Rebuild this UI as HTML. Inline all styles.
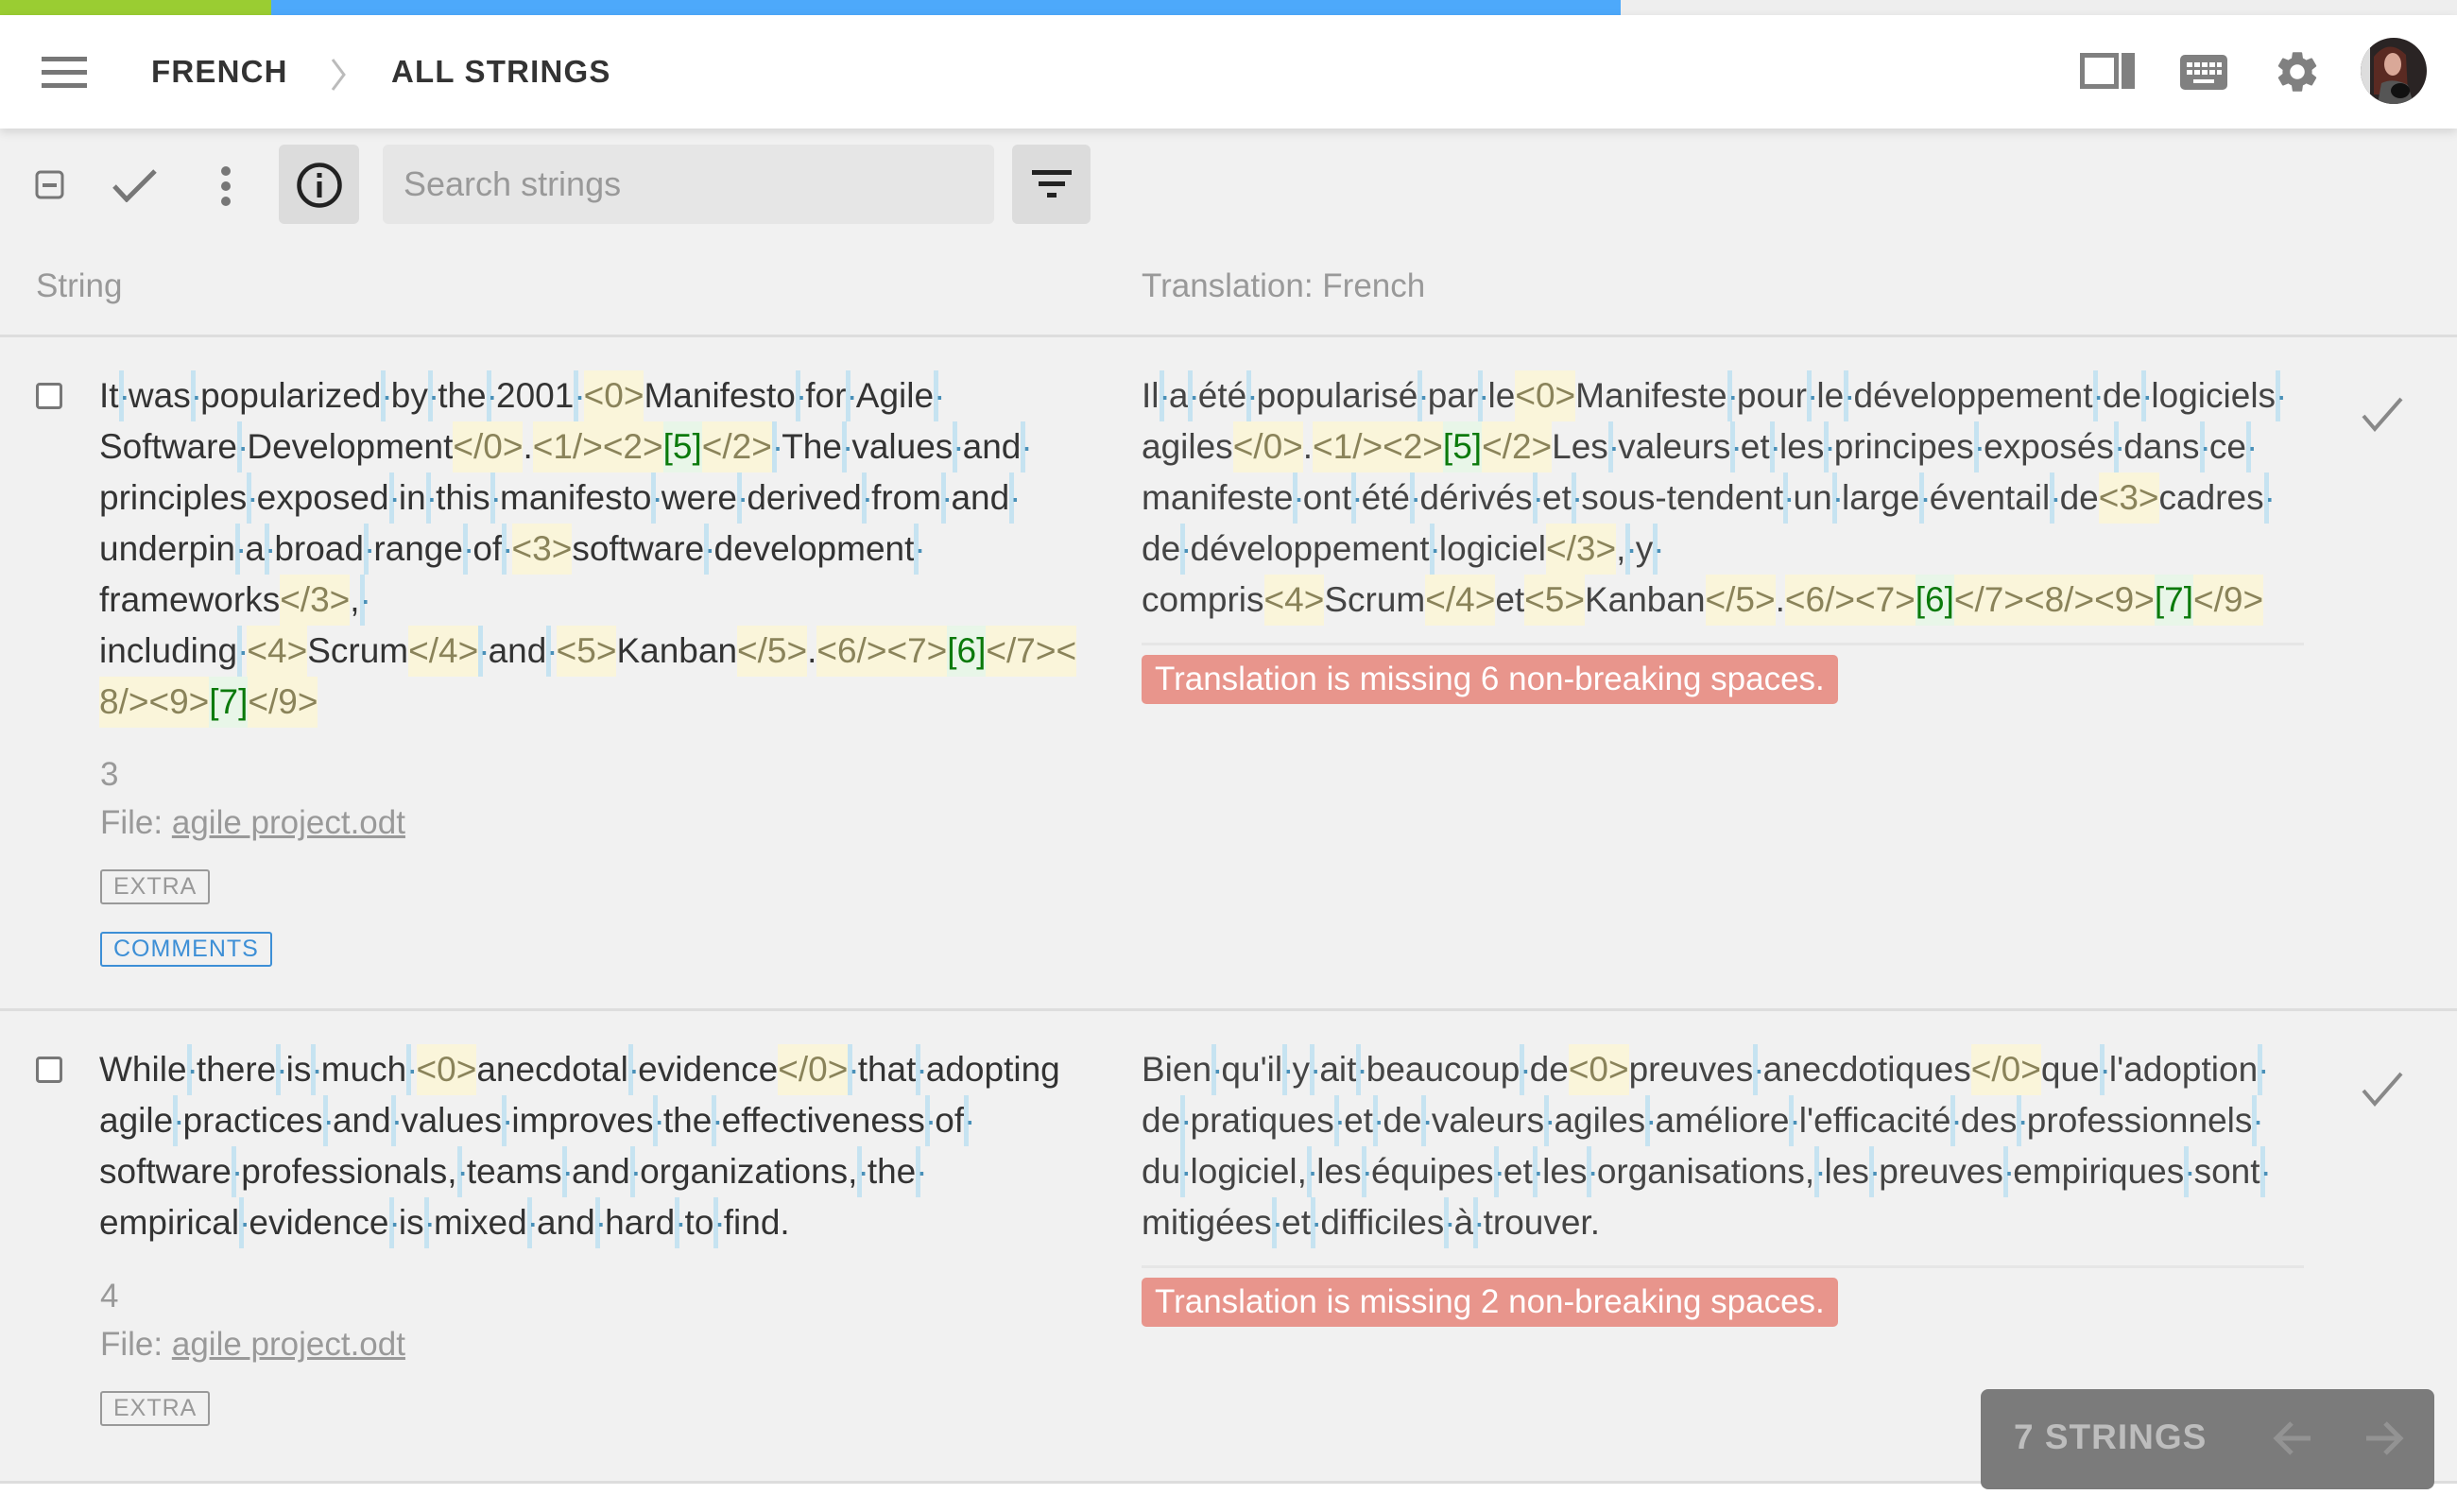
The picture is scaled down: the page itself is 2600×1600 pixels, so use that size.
<!DOCTYPE html>
<html><head><meta charset="utf-8"><style>
*{margin:0;padding:0;box-sizing:border-box}
body{width:2600px;height:1600px;background:#f1f1f1;font-family:"Liberation Sans",sans-serif;position:relative;overflow:hidden;color:#333}
.pb{position:absolute;top:0;left:0;height:16px;width:2600px;background:#eee}
.pb .g{position:absolute;left:0;top:0;height:16px;width:287px;background:#9acd32}
.pb .b{position:absolute;left:287px;top:0;height:16px;width:1428px;background:#4da9fb}
.hd{position:absolute;top:16px;left:0;width:2600px;height:120px;background:#fff;box-shadow:0 4px 10px rgba(0,0,0,.12)}
.crumb{position:absolute;top:41px;font-size:33px;font-weight:bold;letter-spacing:1.2px;color:#333}
.abs{position:absolute}
.hdr{position:absolute;top:283px;font-size:35px;color:#999}
.hr{position:absolute;left:0;width:2600px;height:3px;background:#ddd}
.txt{position:absolute;font-size:37px;color:#333}
.txt .l{height:54px;line-height:54px;white-space:nowrap}
.tr{color:#444}
i{font-style:normal;color:#4a90b8;display:inline-block;width:.28em;text-align:center;background:linear-gradient(90deg,#c6e3f1 0,#c6e3f1 5px,transparent 5px);height:54px;vertical-align:top}
b{font-weight:normal;background:#faf5da;color:#8a835a;display:inline-block;height:54px;vertical-align:top}
var{font-style:normal;color:#0b7a0b;background:#e8f6e8;display:inline-block;height:54px;vertical-align:top}
.cb{position:absolute;left:38px;width:28px;height:28px;border:3px solid #777;border-radius:4px;background:#fff}
.meta{position:absolute;left:106px;font-size:35px;color:#999}
.tag{position:absolute;left:106px;height:37px;border:2px solid #999;border-radius:3px;font-size:25px;color:#999;line-height:33px;padding:0 12px;letter-spacing:1px}
.badge{position:absolute;left:1208px;height:52px;background:#e8958c;color:#fff;font-size:35px;line-height:52px;padding:0 14px;border-radius:5px}
.ck{position:absolute;left:2498px}
</style></head><body>
<div class="pb"><div class="g"></div><div class="b"></div></div>
<div class="hd">
 <svg class="abs" style="left:44px;top:44px" width="48" height="34" viewBox="0 0 48 34"><rect y="0" width="48" height="5" fill="#777"/><rect y="14" width="48" height="5" fill="#777"/><rect y="28" width="48" height="5" fill="#777"/></svg>
 <div class="crumb" style="left:160px">FRENCH</div>
 <svg class="abs" style="left:348px;top:43px" width="20" height="40" viewBox="0 0 20 40"><path d="M4 4 L16 20 L4 36" stroke="#bbb" stroke-width="3" fill="none"/></svg>
 <div class="crumb" style="left:414px">ALL STRINGS</div>
 <svg class="abs" style="left:2201px;top:40px" width="58" height="38" viewBox="0 0 58 38"><rect x="2.5" y="2.5" width="36" height="33" fill="none" stroke="#808080" stroke-width="5"/><rect x="44" y="0" width="14" height="38" fill="#808080"/></svg>
 <svg class="abs" style="left:2307px;top:42px" width="50" height="37" viewBox="0 0 50 37"><rect width="50" height="37" rx="5" fill="#808080"/><g fill="#fff"><rect x="7" y="8" width="6" height="5"/><rect x="15" y="8" width="6" height="5"/><rect x="23" y="8" width="6" height="5"/><rect x="31" y="8" width="6" height="5"/><rect x="39" y="8" width="5" height="5"/><rect x="7" y="16" width="6" height="5"/><rect x="15" y="16" width="6" height="5"/><rect x="23" y="16" width="6" height="5"/><rect x="31" y="16" width="6" height="5"/><rect x="39" y="16" width="5" height="5"/><rect x="14" y="26" width="22" height="4"/></g></svg>
 <svg class="abs" style="left:2405px;top:34px" width="52" height="52" viewBox="0 0 24 24"><path fill="#808080" d="M19.14 12.94c.04-.3.06-.61.06-.94 0-.32-.02-.64-.07-.94l2.030-1.58c.18-.14.23-.41.12-.61l-1.92-3.32c-.12-.22-.37-.29-.59-.22l-2.39.96c-.5-.38-1.03-.7-1.62-.94l-.36-2.54c-.04-.24-.24-.41-.48-.41h-3.84c-.24 0-.43.17-.47.41l-.36 2.54c-.59.24-1.13.57-1.62.94l-2.39-.96c-.22-.08-.47 0-.59.22L2.74 8.87c-.12.21-.08.47.12.61l2.03 1.58c-.05.3-.09.63-.09.94s.02.64.07.94l-2.03 1.58c-.18.14-.23.41-.12.61l1.92 3.32c.12.22.37.29.59.22l2.39-.96c.5.38 1.03.7 1.62.94l.36 2.54c.05.24.24.41.48.41h3.84c.24 0 .44-.17.47-.41l.36-2.54c.59-.24 1.130-.56 1.62-.94l2.39.96c.22.08.47 0 .59-.22l1.92-3.32c.12-.22.07-.47-.12-.61l-2.01-1.58zM12 15.6c-1.98 0-3.6-1.62-3.6-3.6s1.62-3.6 3.6-3.6 3.6 1.62 3.6 3.6-1.62 3.6-3.6 3.6z"/></svg>
 <svg class="abs" style="left:2498px;top:24px" width="70" height="70" viewBox="0 0 70 70"><defs><clipPath id="c"><circle cx="35" cy="35" r="35"/></clipPath></defs><g clip-path="url(#c)"><rect width="70" height="70" fill="#2a2424"/><rect width="10" height="70" fill="#ddd"/><path d="M14 20 Q30 0 48 18 L50 60 L14 60Z" fill="#5a2a22"/><ellipse cx="34" cy="28" rx="9" ry="12" fill="#d9a898"/><path d="M18 70 L22 48 Q35 42 50 50 L56 70Z" fill="#555"/><ellipse cx="42" cy="56" rx="10" ry="8" fill="#111"/></g></svg>
</div>

<svg class="abs" style="left:37px;top:180px" width="32" height="31" viewBox="0 0 32 31"><rect x="2" y="2" width="27" height="27" rx="4" fill="none" stroke="#777" stroke-width="3"/><rect x="8" y="14" width="15" height="4" fill="#777"/></svg>
<svg class="abs" style="left:118px;top:178px" width="50" height="36" viewBox="0 0 50 36"><path d="M3 19 L16 33 L46 3" stroke="#777" stroke-width="5" fill="none"/></svg>
<svg class="abs" style="left:231px;top:175px" width="16" height="44" viewBox="0 0 16 44"><circle cx="8" cy="6" r="5" fill="#777"/><circle cx="8" cy="22" r="5" fill="#777"/><circle cx="8" cy="38" r="5" fill="#777"/></svg>
<div class="abs" style="left:295px;top:153px;width:85px;height:84px;background:#dcdcdc;border-radius:6px"></div>
<svg class="abs" style="left:313px;top:171px" width="50" height="50" viewBox="0 0 50 50"><circle cx="25" cy="25" r="21.5" fill="none" stroke="#222" stroke-width="4.5"/><rect x="22.5" y="21" width="5" height="17" fill="#222"/><rect x="22.5" y="12" width="5" height="5" fill="#222"/></svg>
<div class="abs" style="left:405px;top:153px;width:647px;height:84px;background:#e6e6e6;border-radius:6px;font-size:36px;color:#999;line-height:84px;padding-left:22px">Search strings</div>
<div class="abs" style="left:1071px;top:153px;width:83px;height:84px;background:#dcdcdc;border-radius:6px"></div>
<svg class="abs" style="left:1092px;top:180px" width="42" height="30" viewBox="0 0 42 30"><rect x="0" y="0" width="42" height="5" fill="#222"/><rect x="7" y="12" width="28" height="5" fill="#222"/><rect x="16" y="24" width="10" height="5" fill="#222"/></svg>

<div class="hdr" style="left:38px">String</div>
<div class="hdr" style="left:1208px">Translation: French</div>
<div class="hr" style="top:354px"></div>

<div class="cb" style="top:405px"></div>
<div class="txt" style="left:105px;top:392px">
<div class="l">It<i>·</i>was<i>·</i>popularized<i>·</i>by<i>·</i>the<i>·</i>2001<i>·</i><b>&lt;0&gt;</b>Manifesto<i>·</i>for<i>·</i>Agile<i>·</i></div>
<div class="l">Software<i>·</i>Development<b>&lt;/0&gt;</b>.<b>&lt;1/&gt;&lt;2&gt;</b><var>[5]</var><b>&lt;/2&gt;</b><i>·</i>The<i>·</i>values<i>·</i>and<i>·</i></div>
<div class="l">principles<i>·</i>exposed<i>·</i>in<i>·</i>this<i>·</i>manifesto<i>·</i>were<i>·</i>derived<i>·</i>from<i>·</i>and<i>·</i></div>
<div class="l">underpin<i>·</i>a<i>·</i>broad<i>·</i>range<i>·</i>of<i>·</i><b>&lt;3&gt;</b>software<i>·</i>development<i>·</i></div>
<div class="l">frameworks<b>&lt;/3&gt;</b>,<i>·</i></div>
<div class="l">including<i>·</i><b>&lt;4&gt;</b>Scrum<b>&lt;/4&gt;</b><i>·</i>and<i>·</i><b>&lt;5&gt;</b>Kanban<b>&lt;/5&gt;</b>.<b>&lt;6/&gt;&lt;7&gt;</b><var>[6]</var><b>&lt;/7&gt;&lt;</b></div>
<div class="l"><b>8/&gt;&lt;9&gt;</b><var>[7]</var><b>&lt;/9&gt;</b></div>
</div>
<div class="meta" style="top:800px">3</div>
<div class="meta" style="top:851px">File: <span style="text-decoration:underline">agile project.odt</span></div>
<div class="tag" style="top:920px">EXTRA</div>
<div class="tag" style="top:986px;border-color:#3d8fd6;color:#3d8fd6">COMMENTS</div>

<div class="txt tr" style="left:1208px;top:392px">
<div class="l">Il<i>·</i>a<i>·</i>été<i>·</i>popularisé<i>·</i>par<i>·</i>le<b>&lt;0&gt;</b>Manifeste<i>·</i>pour<i>·</i>le<i>·</i>développement<i>·</i>de<i>·</i>logiciels<i>·</i></div>
<div class="l">agiles<b>&lt;/0&gt;</b>.<b>&lt;1/&gt;&lt;2&gt;</b><var>[5]</var><b>&lt;/2&gt;</b>Les<i>·</i>valeurs<i>·</i>et<i>·</i>les<i>·</i>principes<i>·</i>exposés<i>·</i>dans<i>·</i>ce<i>·</i></div>
<div class="l">manifeste<i>·</i>ont<i>·</i>été<i>·</i>dérivés<i>·</i>et<i>·</i>sous-tendent<i>·</i>un<i>·</i>large<i>·</i>éventail<i>·</i>de<b>&lt;3&gt;</b>cadres<i>·</i></div>
<div class="l">de<i>·</i>développement<i>·</i>logiciel<b>&lt;/3&gt;</b>,<i>·</i>y<i>·</i></div>
<div class="l">compris<b>&lt;4&gt;</b>Scrum<b>&lt;/4&gt;</b>et<b>&lt;5&gt;</b>Kanban<b>&lt;/5&gt;</b>.<b>&lt;6/&gt;&lt;7&gt;</b><var>[6]</var><b>&lt;/7&gt;&lt;8/&gt;&lt;9&gt;</b><var>[7]</var><b>&lt;/9&gt;</b></div>
</div>
<div class="abs" style="left:1208px;top:680px;width:1230px;height:3px;background:#e6e6e6"></div>
<div class="badge" style="top:693px">Translation is missing 6 non-breaking spaces.</div>
<svg class="ck" style="top:418px" width="46" height="40" viewBox="0 0 46 40"><path d="M3 22 L15 36 L43 4" stroke="#888" stroke-width="4" fill="none"/></svg>
<div class="hr" style="top:1067px"></div>

<div class="cb" style="top:1118px"></div>
<div class="txt" style="left:105px;top:1105px">
<div class="l">While<i>·</i>there<i>·</i>is<i>·</i>much<i>·</i><b>&lt;0&gt;</b>anecdotal<i>·</i>evidence<b>&lt;/0&gt;</b><i>·</i>that<i>·</i>adopting</div>
<div class="l">agile<i>·</i>practices<i>·</i>and<i>·</i>values<i>·</i>improves<i>·</i>the<i>·</i>effectiveness<i>·</i>of<i>·</i></div>
<div class="l">software<i>·</i>professionals,<i>·</i>teams<i>·</i>and<i>·</i>organizations,<i>·</i>the<i>·</i></div>
<div class="l">empirical<i>·</i>evidence<i>·</i>is<i>·</i>mixed<i>·</i>and<i>·</i>hard<i>·</i>to<i>·</i>find.</div>
</div>
<div class="meta" style="top:1352px">4</div>
<div class="meta" style="top:1403px">File: <span style="text-decoration:underline">agile project.odt</span></div>
<div class="tag" style="top:1472px">EXTRA</div>

<div class="txt tr" style="left:1208px;top:1105px">
<div class="l">Bien<i>·</i>qu'il<i>·</i>y<i>·</i>ait<i>·</i>beaucoup<i>·</i>de<b>&lt;0&gt;</b>preuves<i>·</i>anecdotiques<b>&lt;/0&gt;</b>que<i>·</i>l'adoption<i>·</i></div>
<div class="l">de<i>·</i>pratiques<i>·</i>et<i>·</i>de<i>·</i>valeurs<i>·</i>agiles<i>·</i>améliore<i>·</i>l'efficacité<i>·</i>des<i>·</i>professionnels<i>·</i></div>
<div class="l">du<i>·</i>logiciel,<i>·</i>les<i>·</i>équipes<i>·</i>et<i>·</i>les<i>·</i>organisations,<i>·</i>les<i>·</i>preuves<i>·</i>empiriques<i>·</i>sont<i>·</i></div>
<div class="l">mitigées<i>·</i>et<i>·</i>difficiles<i>·</i>à<i>·</i>trouver.</div>
</div>
<div class="abs" style="left:1208px;top:1339px;width:1230px;height:3px;background:#e6e6e6"></div>
<div class="badge" style="top:1352px">Translation is missing 2 non-breaking spaces.</div>
<svg class="ck" style="top:1132px" width="46" height="40" viewBox="0 0 46 40"><path d="M3 22 L15 36 L43 4" stroke="#888" stroke-width="4" fill="none"/></svg>

<div class="abs" style="left:0;top:1567px;width:2600px;height:33px;background:#fff;border-top:3px solid #ddd"></div>
<div class="abs" style="left:2096px;top:1470px;width:480px;height:106px;background:#7b7b7b;border-radius:8px"></div>
<div class="abs" style="left:2131px;top:1500px;font-size:37px;font-weight:bold;color:#bdbdbd;letter-spacing:1px">7 STRINGS</div>
<svg class="abs" style="left:2405px;top:1500px" width="44" height="44" viewBox="0 0 44 44"><path d="M40 22 H6 M20 6 L4 22 L20 38" stroke="#939393" stroke-width="5" fill="none"/></svg>
<svg class="abs" style="left:2500px;top:1500px" width="44" height="44" viewBox="0 0 44 44"><path d="M4 22 H38 M24 6 L40 22 L24 38" stroke="#939393" stroke-width="5" fill="none"/></svg>
</body></html>
